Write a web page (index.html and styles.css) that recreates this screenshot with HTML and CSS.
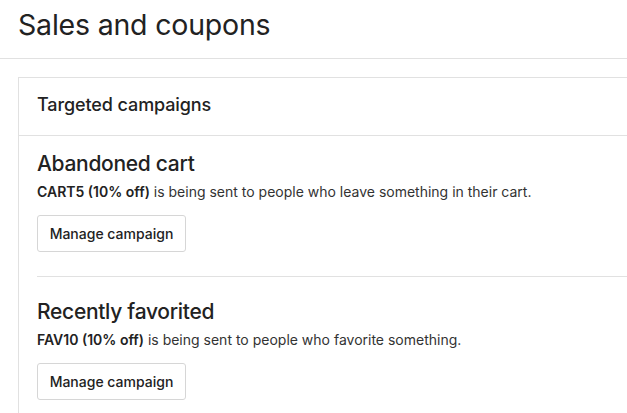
FILE: index.html
```html
<!DOCTYPE html>
<html>
<head>
<meta charset="utf-8">
<link rel="stylesheet" href="styles.css">
</head>
<body>
<header class="page-header">
  <h1 class="page-title">Sales and coupons</h1>
</header>
<main class="content">
  <section class="card">
    <div class="card-header">
      <h2 class="card-title">Targeted campaigns</h2>
    </div>
    <div class="card-body">
      <div class="campaign campaign-first">
        <h3 class="campaign-title">Abandoned cart</h3>
        <p class="campaign-desc"><strong>CART5 (10% off)</strong> is being sent to people who leave something in their cart.</p>
        <button class="btn">Manage campaign</button>
      </div>
      <div class="campaign">
        <h3 class="campaign-title">Recently favorited</h3>
        <p class="campaign-desc"><strong>FAV10 (10% off)</strong> is being sent to people who favorite something.</p>
        <button class="btn">Manage campaign</button>
      </div>
    </div>
  </section>
</main>
</body>
</html>
```
FILE: styles.css
```css
* { box-sizing: border-box; }
html, body {
  margin: 0;
  padding: 0;
  background: #fff;
  color: #222;
  font-family: Inter, "Noto Sans", sans-serif;
  overflow: hidden;
}
.page-header {
  height: 59px;
  border-bottom: 1px solid #e1e1e1;
  padding: 7px 18px 0;
}
.page-title {
  margin: 0;
  font-size: 28.5px;
  line-height: 36px;
  font-weight: 400;
  letter-spacing: -0.2px;
}
.content {
  padding: 18px 0 0 18px;
}
.card {
  border: 1px solid #e1e1e1;
  border-right: none;
  margin-right: -20px;
}
.card-header {
  height: 58px;
  border-bottom: 1px solid #e1e1e1;
  padding: 15px 18px 0;
}
.card-title {
  margin: 0;
  font-size: 18px;
  font-weight: 500;
  line-height: 24px;
  letter-spacing: -0.1px;
}
.card-body {
  padding: 0 0 0 18px;
}
.campaign {
  padding: 21px 0 24px;
  border-bottom: 1px solid #e1e1e1;
}
.campaign-first { padding-top: 14px; }
.campaign-title {
  margin: 0 0 4px;
  font-size: 21px;
  line-height: 28px;
  font-weight: 500;
  letter-spacing: -0.3px;
}
.campaign-desc {
  margin: 0 0 13px;
  font-size: 14px;
  line-height: 20px;
  color: #333;
}
.campaign-desc strong { font-weight: 600; color: #222; }
.btn {
  display: block;
  font-family: inherit;
  font-size: 14px;
  font-weight: 500;
  color: #222;
  background: #fff;
  border: 1px solid #d6d6d6;
  border-radius: 3px;
  width: 149px;
  height: 37px;
  padding: 0;
}
```
